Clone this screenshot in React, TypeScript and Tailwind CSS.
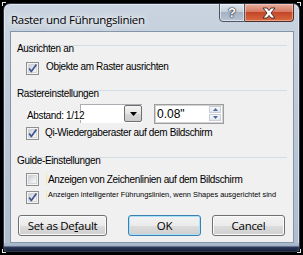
import React from 'react';

const CheckBox = ({ checked }: { checked?: boolean }) => (
  <div className="relative w-[13px] h-[13px] shrink-0 border border-[#8e8f8f] bg-[#f4f4f4] p-[1px]">
    <div className="w-full h-full border border-[#d4d6d9] bg-[linear-gradient(135deg,#c9cdd3_0%,#e6e8eb_55%,#f8f8f8_100%)]" />
    {checked && (
      <svg className="absolute left-0 top-0" width="11" height="11" viewBox="0 0 11 11">
        <path d="M2.2 5.6 L4.3 8.6 L9.4 1.6" fill="none" stroke="#3f5590" strokeWidth="1.7" strokeLinejoin="round" />
      </svg>
    )}
  </div>
);

const Heading = ({ children, className = '' }: { children: React.ReactNode; className?: string }) => (
  <div className={`mx-[6px] h-[7px] border-t border-[#d3dbe4] leading-[6px] ${className}`}>
    <span>{children}</span>
  </div>
);

const WinButton = ({ children, primary, className = '' }: { children: React.ReactNode; primary?: boolean; className?: string }) => (
  <button
    className={`h-[21px] rounded-[3px] border flex items-center justify-center text-[11.5px] tracking-[-0.3px] text-black [font-family:'Open_Sans',sans-serif] bg-[linear-gradient(to_bottom,#f2f2f2_0%,#ebebeb_50%,#dddddd_50%,#cfcfcf_100%)] ${
      primary
        ? 'border-[#3c7fb1] shadow-[inset_0_0_0_1px_#a6e3f8]'
        : 'border-[#707070] shadow-[inset_0_0_0_1px_#fbfbfb]'
    } ${className}`}
  >
    {children}
  </button>
);

export default function App() {
  return (
    <div className="relative w-[303px] h-[255px] bg-black p-[3px] [font-family:'Liberation_Sans',Arial,sans-serif]">
      {/* corner marks */}
      <div className="absolute left-[2px] top-[2px] w-[4px] h-[4px] border-l border-t border-[#e8e8e8]" />
      <div className="absolute right-[2px] top-[2px] w-[4px] h-[4px] border-r border-t border-[#e8e8e8]" />
      <div className="absolute left-[2px] bottom-[2px] w-[4px] h-[4px] border-l border-b border-[#e8e8e8]" />
      <div className="absolute right-[2px] bottom-[2px] w-[4px] h-[4px] border-r border-b border-[#e8e8e8]" />

      <div className="h-[249px] flex flex-col overflow-hidden rounded-t-[7px] rounded-b-[4px] border border-[#2f3846] bg-[linear-gradient(to_bottom,#cad4e0_0%,#bcc8d8_45%,#aebcce_100%)] shadow-[inset_0_0_0_1px_rgba(255,255,255,0.45)]">
        {/* title bar */}
        <div className="relative h-[27px] shrink-0">
          <div className="pl-[7px] pt-[9px] text-[11.5px] leading-[14px] tracking-[-0.3px] text-black [font-family:'Open_Sans',sans-serif] [text-shadow:0_0_6px_#ffffff,0_0_10px_#ffffff]">
            Raster und Führungslinien
          </div>
          <div className="absolute top-[-1px] right-[5px] flex">
            <div className="w-[26px] h-[19px] flex items-center justify-center rounded-bl-[4px] border border-[#4b5566] bg-[linear-gradient(to_bottom,#dfe5ed_0%,#c6cfdb_45%,#a5b2c5_50%,#b7c3d3_100%)] shadow-[inset_0_0_0_1px_rgba(255,255,255,0.5)]">
              <span className="text-[13px] font-bold leading-none text-white [font-family:'Liberation_Sans',sans-serif] [text-shadow:0_0_1px_#1d2430,0_0_1px_#1d2430,0_0_2px_#1d2430]">?</span>
            </div>
            <div className="w-[49px] h-[19px] flex items-center justify-center rounded-br-[4px] border border-l-0 border-[#4a2e2a] bg-[linear-gradient(to_bottom,#e9ae9f_0%,#d77a62_45%,#c4462a_50%,#d8693d_100%)] shadow-[inset_0_0_0_1px_rgba(255,220,210,0.5)]">
              <svg width="14" height="12" viewBox="0 0 14 12">
                <path
                  d="M1 1 H5 L7 3.6 L9 1 H13 L9 6 L13 11 H9 L7 8.4 L5 11 H1 L5 6 Z"
                  fill="#ffffff"
                  stroke="#3a2521"
                  strokeWidth="0.9"
                  strokeLinejoin="round"
                />
              </svg>
            </div>
          </div>
        </div>

        {/* client area */}
        <div className="ml-[6px] w-[284px] h-[212px] shrink-0 border border-[#8595a9] bg-[#f0f0f0]">
          <div className="flex flex-col pt-[13px] text-[10px] tracking-[-0.35px] text-black">
            <Heading>Ausrichten an</Heading>

            <div className="mt-[10px] ml-[15px] flex items-start gap-[7px]">
              <CheckBox checked />
              <span className="leading-[10px]">Objekte am Raster ausrichten</span>
            </div>

            <Heading className="mt-[15px]">Rastereinstellungen</Heading>

            <div className="relative mt-[7px] h-[20px] flex">
              <span className="absolute left-[16px] bottom-[4px] z-10 bg-white leading-[9px]">Abstand: 1/12</span>
              <div className="ml-[69px] w-[62px] h-[19px] flex justify-end border-t border-l border-[#abadb3] bg-white">
                <div className="w-[18px] h-[17px] flex items-center justify-center rounded-[2px] border border-[#6f6f6f] bg-[linear-gradient(to_bottom,#f3f3f3_0%,#e6e6e6_50%,#d6d6d6_51%,#cdcdcd_100%)]">
                  <svg width="7" height="4" viewBox="0 0 7 4">
                    <path d="M0 0 H7 L3.5 4 Z" fill="#000000" />
                  </svg>
                </div>
              </div>
              <div className="ml-[12px] w-[70px] h-[20px] flex items-start justify-between border border-[#9d9d9d] bg-white shadow-[inset_0_0_0_1px_#d2d2d2]">
                <span className="pl-[2px] pt-[3px] text-[12px] leading-[13px] tracking-[0px]">0.08"</span>
                <div className="mr-[2px] mt-[1px] w-[12px] flex flex-col gap-[1px]">
                  <div className="h-[7px] flex items-center justify-center border border-[#c9ced6] bg-[linear-gradient(to_bottom,#f6f8fa,#e2e6ec)]">
                    <svg width="5" height="3" viewBox="0 0 5 3">
                      <path d="M0 3 H5 L2.5 0 Z" fill="#4b6aa3" />
                    </svg>
                  </div>
                  <div className="h-[7px] flex items-center justify-center border border-[#c9ced6] bg-[linear-gradient(to_bottom,#f6f8fa,#e2e6ec)]">
                    <svg width="5" height="3" viewBox="0 0 5 3">
                      <path d="M0 0 H5 L2.5 3 Z" fill="#4b6aa3" />
                    </svg>
                  </div>
                </div>
              </div>
            </div>

            <div className="mt-[3px] ml-[15px] flex items-start gap-[6px]">
              <CheckBox checked />
              <span className="leading-[12px]">Qi-Wiedergaberaster auf dem Bildschirm</span>
            </div>

            <Heading className="mt-[17px]">Guide-Einstellungen</Heading>

            <div className="mt-[9px] ml-[15px] flex items-start gap-[7px]">
              <CheckBox />
              <span className="leading-[13px] pl-[1px] border-l border-[#f2e9b0]">Anzeigen von Zeichenlinien auf dem Bildschirm</span>
            </div>

            <div className="mt-[5px] ml-[15px] flex items-start gap-[7px]">
              <CheckBox checked />
              <span className="text-[7.4px] tracking-[0px] leading-[8px] pl-[1px] border-l border-[#f2e9b0] whitespace-nowrap">
                Anzeigen intelligenter Führungslinien, wenn Shapes ausgerichtet sind
              </span>
            </div>

            <div className="mt-[11px] ml-[7px] flex">
              <WinButton className="w-[89px]">
                Set as De<span className="underline">f</span>ault
              </WinButton>
              <WinButton primary className="ml-[21px] w-[73px]">OK</WinButton>
              <WinButton className="ml-[11px] w-[73px]">Cancel</WinButton>
            </div>
          </div>
        </div>

        {/* bottom frame */}
        <div className="flex-1 bg-[linear-gradient(to_bottom,#aab8cb_0%,#aab8cb_30%,#2a3758_55%,#161f38_100%)]" />
      </div>
    </div>
  );
}
